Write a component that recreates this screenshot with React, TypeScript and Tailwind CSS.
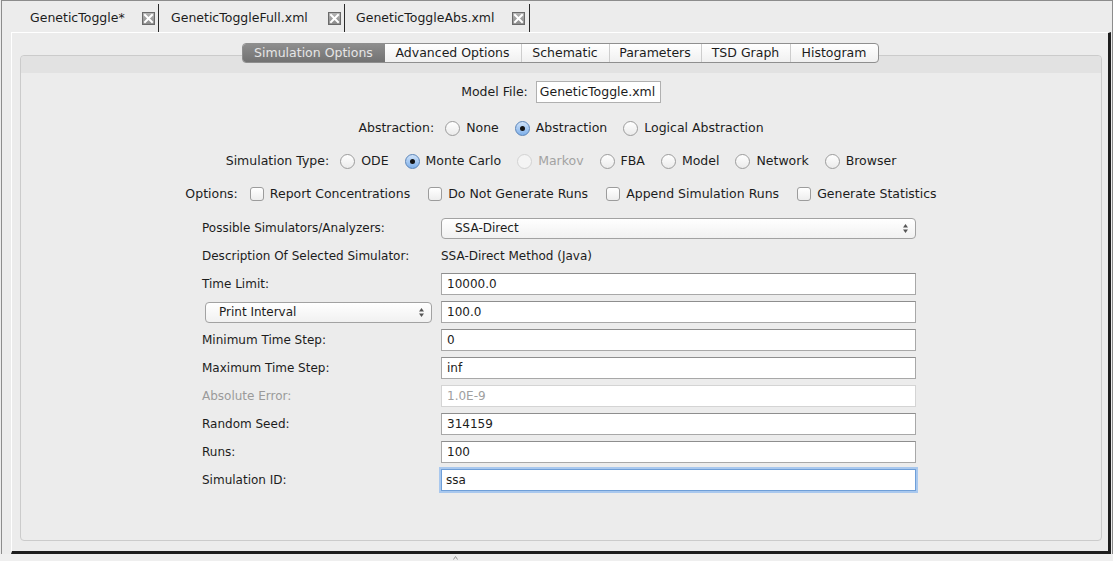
import React from "react"

function CloseBox() {
  return (
    <svg width="13" height="13" viewBox="0 0 13 13">
      <defs>
        <linearGradient id="cb" x1="0" y1="0" x2="0" y2="1">
          <stop offset="0" stopColor="#b4b4b4" />
          <stop offset="1" stopColor="#8a8a8a" />
        </linearGradient>
      </defs>
      <rect x="0.5" y="0.5" width="12" height="12" fill="url(#cb)" stroke="#6a6a6a" />
      <path d="M3 3 L10 10 M10 3 L3 10" stroke="#ffffff" strokeWidth="2" strokeLinecap="square" />
    </svg>
  )
}

function Arrows() {
  return (
    <svg width="7" height="11" viewBox="0 0 7 11">
      <path d="M3.5 1 L6 4.5 L1 4.5 Z" fill="#555" />
      <path d="M3.5 10 L6 6.5 L1 6.5 Z" fill="#555" />
    </svg>
  )
}

function Radio({ label, checked, disabled }: { label: string; checked?: boolean; disabled?: boolean }) {
  return (
    <div className="flex items-center gap-[6px]">
      {checked ? (
        <span className="flex h-[15px] w-[15px] items-center justify-center rounded-full border border-[#5a84b8] bg-gradient-to-b from-[#cfe2f8] to-[#7fb0ea]">
          <span className="h-[5px] w-[5px] rounded-full bg-[#141414]" />
        </span>
      ) : disabled ? (
        <span className="h-[15px] w-[15px] rounded-full border border-[#d2d2d2] bg-[#f4f4f4]" />
      ) : (
        <span className="h-[15px] w-[15px] rounded-full border border-[#9c9c9c] bg-gradient-to-b from-white to-[#ebebeb]" />
      )}
      <span className={disabled ? "text-[#a2a2a2]" : "text-[#1c1c1c]"}>{label}</span>
    </div>
  )
}

function Check({ label }: { label: string }) {
  return (
    <div className="flex items-center gap-[6px]">
      <span className="h-[14px] w-[14px] rounded-[3px] border border-[#9c9c9c] bg-gradient-to-b from-white to-[#ededed]" />
      <span>{label}</span>
    </div>
  )
}

function Field({ value, disabled, focused }: { value: string; disabled?: boolean; focused?: boolean }) {
  if (focused) {
    return (
      <div className="flex h-[22px] w-[475px] items-center border border-[#6f9fd8] bg-white pl-[4px] shadow-[0_0_0_2px_#a9c8ee]">
        {value}
      </div>
    )
  }
  return (
    <div
      className={
        disabled
          ? "flex h-[22px] w-[475px] items-center border border-[#d4d4d4] bg-white pl-[5px] text-[#a0a0a0]"
          : "flex h-[22px] w-[475px] items-center border border-[#a8a8a8] border-t-[#8e8e8e] bg-white pl-[5px]"
      }
    >
      {value}
    </div>
  )
}

function Select({ value, width, pad }: { value: string; width: string; pad: string }) {
  return (
    <div
      className={`flex h-[21px] items-center justify-between rounded-[4px] border border-[#a2a2a2] bg-gradient-to-b from-white to-[#f1f1f1] pr-[6px] ${width} ${pad}`}
    >
      <span>{value}</span>
      <Arrows />
    </div>
  )
}

const innerTabs = [
  { label: "Simulation Options", w: "w-[142px]" },
  { label: "Advanced Options", w: "w-[137px]" },
  { label: "Schematic", w: "w-[88px]" },
  { label: "Parameters", w: "w-[92px]" },
  { label: "TSD Graph", w: "w-[89px]" },
  { label: "Histogram", w: "w-[87px]" },
]

const rows: { label: string; value: string; disabled?: boolean; focused?: boolean }[] = [
  { label: "Minimum Time Step:", value: "0" },
  { label: "Maximum Time Step:", value: "inf" },
  { label: "Absolute Error:", value: "1.0E-9", disabled: true },
  { label: "Random Seed:", value: "314159" },
  { label: "Runs:", value: "100" },
  { label: "Simulation ID:", value: "ssa", focused: true },
]

export default function App() {
  return (
    <div className="flex h-[561px] w-[1113px] flex-col bg-[#ececec] font-['DejaVu_Sans',sans-serif] text-[12.5px] text-[#1c1c1c]">
      <div className="ml-[1px] flex h-[554px] flex-col border-l border-r border-t border-[#8c8c8c]">
        {/* document tabs */}
        <div className="flex h-[31px] items-end pl-[14px]">
          <div className="flex h-[28px] w-[143px] items-center justify-between border-r border-[#2a2a2a] pl-[14px] pr-[3px]">
            <span>GeneticToggle*</span>
            <CloseBox />
          </div>
          <div className="flex h-[28px] w-[186px] items-center justify-between border-r border-[#2a2a2a] pl-[12px] pr-[3px]">
            <span>GeneticToggleFull.xml</span>
            <CloseBox />
          </div>
          <div className="flex h-[28px] w-[185px] items-center justify-between border-r border-[#2a2a2a] pl-[11px] pr-[4px]">
            <span>GeneticToggleAbs.xml</span>
            <CloseBox />
          </div>
        </div>

        {/* document content */}
        <div className="ml-[9px] mr-[1px] flex flex-1 flex-col border-b-[3px] border-l border-r-[3px] border-t border-b-[#1e1e1e] border-l-white border-r-[#1e1e1e] border-t-white">
          <div className="relative z-10 flex justify-center pt-[10px]">
            <div className="flex h-[20px] overflow-hidden rounded-[4px] border border-[#8f8f8f] bg-gradient-to-b from-white to-[#f0f0f0]">
              {innerTabs.map((t, i) => (
                <div
                  key={t.label}
                  className={
                    i === 0
                      ? `flex items-center justify-center bg-gradient-to-b from-[#8e8e8e] to-[#727272] text-[#e6e6e6] ${t.w}`
                      : i === innerTabs.length - 1
                        ? `flex items-center justify-center ${t.w}`
                        : `flex items-center justify-center border-r border-[#cdcdcd] ${t.w}`
                  }
                >
                  {t.label}
                </div>
              ))}
            </div>
          </div>

          <div className="-mt-[8px] mb-[10px] ml-[8px] mr-[6px] flex flex-1 flex-col rounded-[4px] border border-[#cbcbcb] bg-[#ececec]">
            <div className="h-[17px] rounded-t-[4px] bg-[#e2e2e2]" />

            <div className="mt-[8px] flex h-[22px] items-center justify-center gap-[8px]">
              <span>Model File:</span>
              <div className="flex h-[22px] w-[125px] items-center border border-[#b0b0b0] bg-white pl-[3px]">
                GeneticToggle.xml
              </div>
            </div>

            <div className="mt-[14px] flex h-[22px] items-center justify-center gap-[16px]">
              <span className="-mr-[5px]">Abstraction:</span>
              <Radio label="None" />
              <Radio label="Abstraction" checked />
              <Radio label="Logical Abstraction" />
            </div>

            <div className="mt-[11px] flex h-[22px] items-center justify-center gap-[16px]">
              <span className="-mr-[5px]">Simulation Type:</span>
              <Radio label="ODE" />
              <Radio label="Monte Carlo" checked />
              <Radio label="Markov" disabled />
              <Radio label="FBA" />
              <Radio label="Model" />
              <Radio label="Network" />
              <Radio label="Browser" />
            </div>

            <div className="mt-[11px] flex h-[22px] items-center justify-center gap-[18px]">
              <span className="-mr-[6px]">Options:</span>
              <Check label="Report Concentrations" />
              <Check label="Do Not Generate Runs" />
              <Check label="Append Simulation Runs" />
              <Check label="Generate Statistics" />
            </div>

            {/* simulator settings */}
            <div className="ml-[181px] mt-[12px] flex w-[715px] flex-col gap-[6px] text-[12px]">
              <div className="flex h-[22px] items-center">
                <span className="w-[239px]">Possible Simulators/Analyzers:</span>
                <Select value="SSA-Direct" width="w-[475px]" pad="pl-[13px]" />
              </div>
              <div className="flex h-[22px] items-center">
                <span className="w-[239px]">Description Of Selected Simulator:</span>
                <span>SSA-Direct Method (Java)</span>
              </div>
              <div className="flex h-[22px] items-center">
                <span className="w-[239px]">Time Limit:</span>
                <Field value="10000.0" />
              </div>
              <div className="flex h-[22px] items-center">
                <div className="ml-[3px] mr-[9px]">
                  <Select value="Print Interval" width="w-[227px]" pad="pl-[13px]" />
                </div>
                <Field value="100.0" />
              </div>
              {rows.map((r) => (
                <div key={r.label} className="flex h-[22px] items-center">
                  <span className={r.disabled ? "w-[239px] text-[#9a9a9a]" : "w-[239px]"}>{r.label}</span>
                  <Field value={r.value} disabled={r.disabled} focused={r.focused} />
                </div>
              ))}
            </div>
          </div>
        </div>
      </div>
      <div className="flex flex-1 items-center bg-[#efefef] pl-[453px]">
        <svg width="5" height="4" viewBox="0 0 5 4">
          <path d="M0.5 3.5 L2.5 0.5 L4.5 3.5" stroke="#9a9a9a" fill="none" />
        </svg>
      </div>
    </div>
  )
}
